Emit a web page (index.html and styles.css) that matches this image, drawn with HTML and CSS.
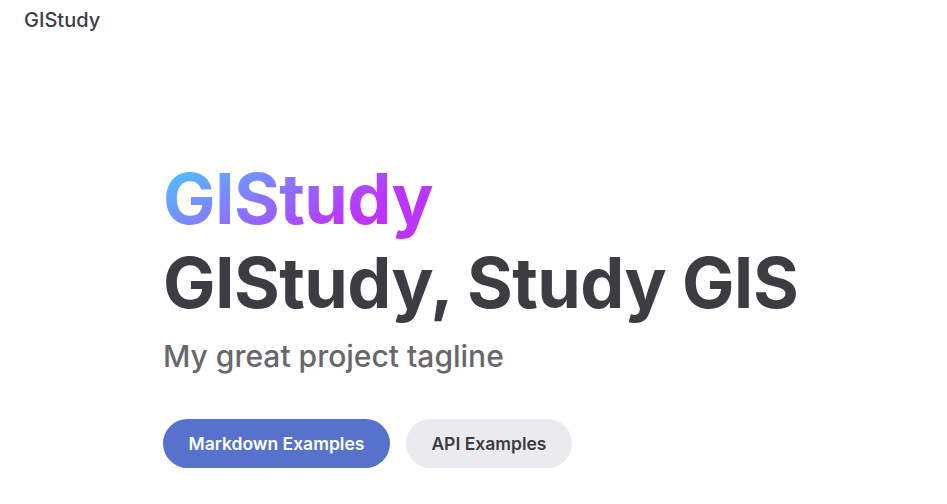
FILE: index.html
```html
<!DOCTYPE html>
<html lang="en">
<head>
<meta charset="utf-8">
<title>GIStudy</title>
<link rel="stylesheet" href="styles.css">
</head>
<body>
<header class="nav">
  <a class="nav-title" href="#">GIStudy</a>
</header>
<main class="hero">
  <div class="hero-main">
    <h1 class="name"><span class="clip">GIStudy</span></h1>
    <p class="text">GIStudy, Study GIS</p>
    <p class="tagline">My great project tagline</p>
    <div class="actions">
      <a class="btn btn-brand" href="#">Markdown Examples</a>
      <a class="btn btn-alt" href="#">API Examples</a>
    </div>
  </div>
</main>
</body>
</html>
```
FILE: styles.css
```css
* { box-sizing: border-box; }
html, body {
  margin: 0;
  padding: 0;
  background: #ffffff;
  font-family: Inter, "Noto Sans", sans-serif;
  color: #3c3c43;
  -webkit-font-smoothing: antialiased;
}
a { text-decoration: none; color: inherit; }

.nav {
  height: 40px;
  display: flex;
  align-items: center;
  padding: 0 24px;
}
.nav-title {
  font-size: 20px;
  font-weight: 500;
  color: #3c3c43;
  line-height: 40px;
}

.hero {
  padding: 117px 0 40px 163px;
}
.hero-main {
  display: flex;
  flex-direction: column;
  align-items: flex-start;
}
.name, .text {
  margin: 0;
  font-size: 70px;
  line-height: 84px;
  font-weight: 700;
  letter-spacing: -0.6px;
}
.name .clip {
  display: inline-block;
  background: linear-gradient(330deg, #bd34fe 30%, #41d1ff);
  -webkit-background-clip: text;
  background-clip: text;
  -webkit-text-fill-color: transparent;
  color: transparent;
}
.text {
  color: #3c3c43;
}
.tagline {
  margin: 9px 0 0;
  font-size: 30px;
  line-height: 45px;
  font-weight: 500;
  color: #67676c;
}
.actions {
  display: flex;
  gap: 16px;
  padding-top: 40px;
}
.btn {
  display: inline-flex;
  align-items: center;
  height: 49px;
  padding: 0 25.5px;
  border-radius: 25px;
  font-size: 17.5px;
  font-weight: 600;
  white-space: nowrap;
}
.btn-brand {
  background: #5672cd;
  color: #ffffff;
}
.btn-alt {
  background: #ebebef;
  color: #3c3c43;
}
```
